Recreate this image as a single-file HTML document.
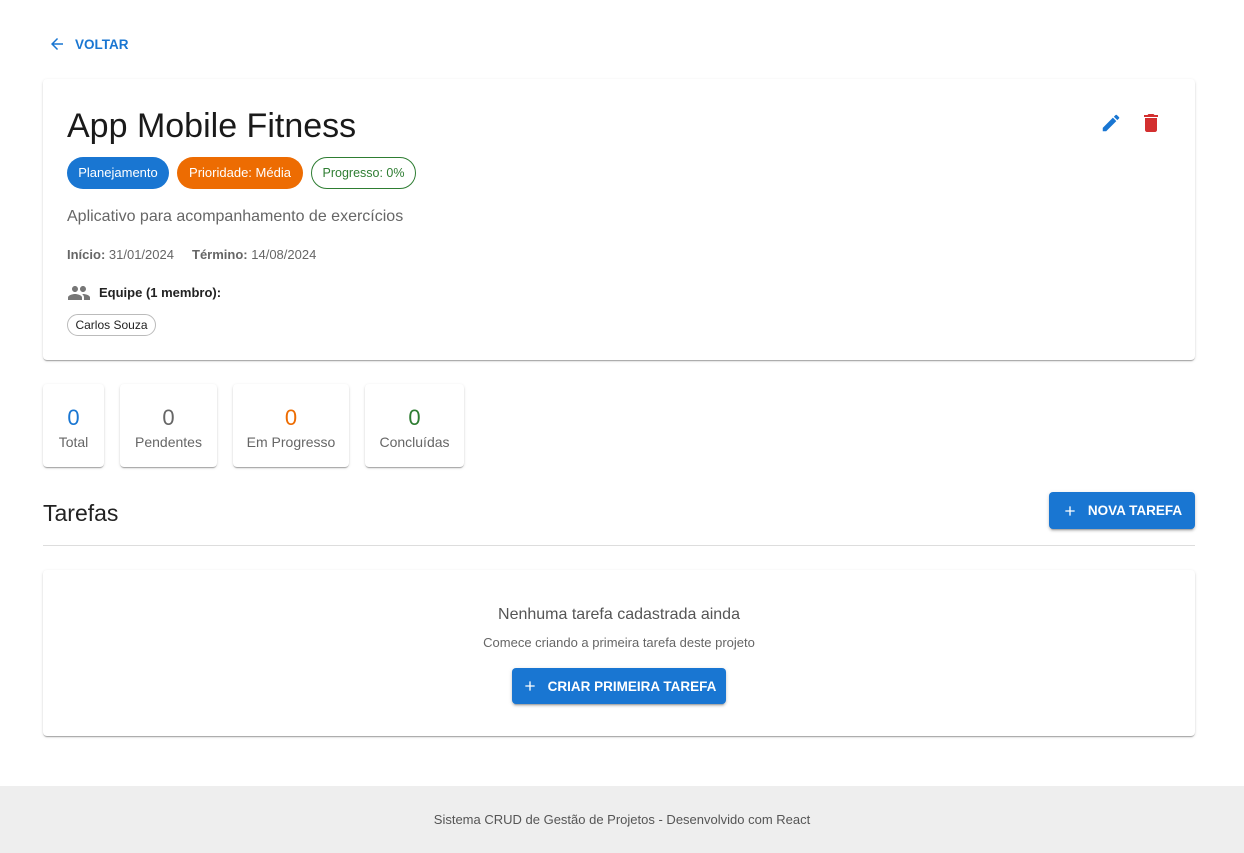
<!DOCTYPE html>
<html><head><meta charset="utf-8"><style>
*{box-sizing:border-box;margin:0;padding:0}
body{width:1244px;height:853px;background:#fff;font-family:"Liberation Sans",Arial,sans-serif;color:#222;position:relative;overflow:hidden}
.abs{position:absolute}
.card{position:absolute;background:#fff;border-radius:4px;box-shadow:0 2px 1px -1px rgba(0,0,0,.2),0 1px 1px 0 rgba(0,0,0,.14),0 1px 3px 0 rgba(0,0,0,.12)}
.chip{position:absolute;height:32px;border-radius:16px;font-size:13px;line-height:32px;text-align:center}
.stat{text-align:center}
.stat .n{font-size:22px;margin-top:20px;line-height:28px}
.stat .l{font-size:14px;color:#666;margin-top:2px}
.btn{position:absolute;background:#1976d2;color:#fff;border-radius:4px;font-weight:bold;font-size:13.5px;box-shadow:0 3px 1px -2px rgba(0,0,0,.2),0 2px 2px 0 rgba(0,0,0,.14),0 1px 5px 0 rgba(0,0,0,.12);display:flex;align-items:center;justify-content:center;gap:10px}
</style></head><body>
<div class="abs" style="left:48px;top:35px;color:#1976d2;font-weight:bold;font-size:13.5px;display:flex;align-items:center;gap:9px">
<svg width="18" height="18" viewBox="0 0 24 24"><path fill="#1976d2" d="M20 11H7.83l5.59-5.59L12 4l-8 8 8 8 1.41-1.41L7.83 13H20v-2z"/></svg>VOLTAR</div>

<div class="card" style="left:43px;top:79px;width:1152px;height:281px">
<div class="abs" style="left:24px;top:28px;font-size:34px;color:#1a1a1a">App Mobile Fitness</div>
<svg class="abs" style="left:1057px;top:33px" width="22" height="22" viewBox="0 0 24 24"><path fill="#1976d2" d="M3 17.25V21h3.75L17.81 9.94l-3.75-3.75L3 17.25zM20.71 7.04a1 1 0 000-1.41l-2.34-2.34a1 1 0 00-1.41 0l-1.83 1.83 3.75 3.75 1.83-1.83z"/></svg>
<svg class="abs" style="left:1096px;top:32px" width="24" height="24" viewBox="0 0 24 24"><path fill="#d32f2f" d="M6 19c0 1.1.9 2 2 2h8c1.1 0 2-.9 2-2V7H6v12zM19 4h-3.5l-1-1h-5l-1 1H5v2h14V4z"/></svg>
<div class="chip" style="left:24px;top:78px;width:102px;background:#1976d2;color:#fff">Planejamento</div>
<div class="chip" style="left:134px;top:78px;width:126px;background:#ed6c02;color:#fff">Prioridade: Média</div>
<div class="chip" style="left:268px;top:78px;width:105px;border:1px solid #2e7d32;color:#2e7d32;line-height:30px;font-size:12.5px">Progresso: 0%</div>
<div class="abs" style="left:24px;top:129px;font-size:16px;color:#666">Aplicativo para acompanhamento de exercícios</div>
<div class="abs" style="left:24px;top:168px;font-size:13px;color:#666"><b>Início:</b> 31/01/2024 &nbsp;&nbsp;&nbsp; <b>Término:</b> 14/08/2024</div>
<svg class="abs" style="left:24px;top:202px" width="24" height="24" viewBox="0 0 24 24"><path fill="#777" d="M16 11c1.66 0 2.99-1.34 2.99-3S17.66 5 16 5s-3 1.34-3 3 1.34 3 3 3zm-8 0c1.66 0 2.990-1.34 2.99-3S9.66 5 8 5 5 6.34 5 8s1.34 3 3 3zm0 2c-2.33 0-7 1.17-7 3.5V19h14v-2.5c0-2.33-4.67-3.5-7-3.5zm8 0c-.29 0-.62.02-.97.05 1.16.84 1.970 1.97 1.97 3.45V19h6v-2.5c0-2.33-4.67-3.5-7-3.5z"/></svg>
<div class="abs" style="left:56px;top:206px;font-size:13px;font-weight:bold;color:#222">Equipe (1 membro):</div>
<div class="chip" style="left:24px;top:235px;width:89px;height:22px;line-height:20px;border:1px solid #bbb;font-size:12px;border-radius:11px">Carlos Souza</div>
</div>

<div class="card stat" style="left:43px;top:384px;width:61px;height:83px"><div class="n" style="color:#1976d2">0</div><div class="l">Total</div></div>
<div class="card stat" style="left:120px;top:384px;width:97px;height:83px"><div class="n" style="color:#666">0</div><div class="l">Pendentes</div></div>
<div class="card stat" style="left:233px;top:384px;width:116px;height:83px"><div class="n" style="color:#ed6c02">0</div><div class="l">Em Progresso</div></div>
<div class="card stat" style="left:365px;top:384px;width:99px;height:83px"><div class="n" style="color:#2e7d32">0</div><div class="l">Concluídas</div></div>

<div class="abs" style="left:43px;top:500px;font-size:23px;color:#222">Tarefas</div>
<div class="btn" style="left:1049px;top:492px;width:146px;height:37px"><svg width="16" height="16" viewBox="0 0 24 24"><path fill="#fff" d="M19 13h-6v6h-2v-6H5v-2h6V5h2v6h6v2z"/></svg>NOVA TAREFA</div>
<div class="abs" style="left:43px;top:545px;width:1152px;height:1px;background:#ddd"></div>

<div class="card" style="left:43px;top:570px;width:1152px;height:166px">
<div class="abs" style="left:0;width:100%;top:36px;text-align:center;font-size:16px;color:#555">Nenhuma tarefa cadastrada ainda</div>
<div class="abs" style="left:0;width:100%;top:65px;text-align:center;font-size:13px;color:#666">Comece criando a primeira tarefa deste projeto</div>
<div class="btn" style="left:469px;top:98px;width:214px;height:36px"><svg width="16" height="16" viewBox="0 0 24 24"><path fill="#fff" d="M19 13h-6v6h-2v-6H5v-2h6V5h2v6h6v2z"/></svg>CRIAR PRIMEIRA TAREFA</div>
</div>

<div class="abs" style="left:0;top:786px;width:1244px;height:67px;background:#eee;text-align:center;line-height:67px;font-size:13px;color:#555">Sistema CRUD de Gestão de Projetos - Desenvolvido com React</div>
</body></html>
